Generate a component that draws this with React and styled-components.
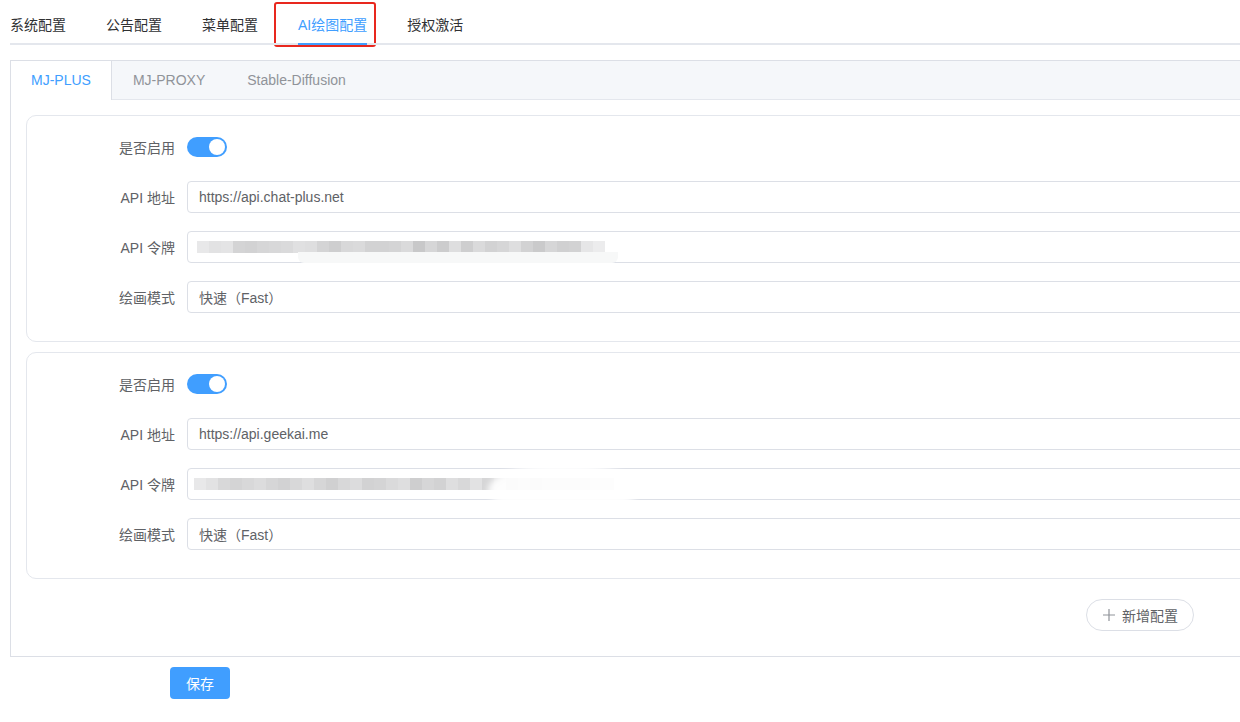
import React from "react";
import styled, { createGlobalStyle } from "styled-components";

const GlobalStyle = createGlobalStyle`
  html, body { margin: 0; padding: 0; background: #fff; overflow: hidden; }
  body { font-family: "Liberation Sans", "Noto Sans CJK SC", sans-serif; font-size: 14px; color: #606266; }
  * { box-sizing: border-box; }
`;

const Page = styled.div`
  width: 1330px;
  padding: 5px 0 0 10px;
`;

const TopNav = styled.div`
  position: relative;
  display: flex;
  height: 40px;
  margin-bottom: 15px;
  &::after {
    content: "";
    position: absolute;
    left: 0;
    right: 0;
    bottom: 0;
    height: 2px;
    background: #e4e7ed;
  }
`;

const TopItem = styled.div`
  position: relative;
  height: 40px;
  line-height: 40px;
  padding: 0 20px;
  font-size: 14px;
  color: ${(p) => (p.$active ? "#409eff" : "#303133")};
  &:first-child { padding-left: 0; }
  &::after {
    content: "";
    display: ${(p) => (p.$active ? "block" : "none")};
    position: absolute;
    left: 20px;
    right: 20px;
    bottom: 0;
    height: 2px;
    background: #409eff;
    z-index: 1;
  }
`;

const Annotation = styled.span`
  position: absolute;
  left: -4px;
  right: 11px;
  top: -3px;
  bottom: -2px;
  border: 2px solid #e8281e;
  border-radius: 3px;
  pointer-events: none;
`;

const Card = styled.div`
  border: 1px solid #dcdfe6;
  background: #fff;
`;

const CardHeader = styled.div`
  display: flex;
  height: 39px;
  background: #f5f7fa;
  border-bottom: 1px solid #e4e7ed;
`;

const CardTab = styled.div`
  height: 39px;
  line-height: 38px;
  padding: 0 20px;
  margin-bottom: -1px;
  font-size: 14px;
  border-left: 1px solid ${(p) => (p.$active ? "#dcdfe6" : "transparent")};
  border-right: 1px solid ${(p) => (p.$active ? "#dcdfe6" : "transparent")};
  background: ${(p) => (p.$active ? "#fff" : "transparent")};
  color: ${(p) => (p.$active ? "#409eff" : "#909399")};
  &:first-child { margin-left: -1px; }
`;

const CardBody = styled.div`
  padding: 15px 15px 10px;
`;

const ConfigBox = styled.div`
  border: 1px solid #e4e7ed;
  border-radius: 10px;
  padding: 15px 0 10px 10px;
  margin-bottom: 10px;
`;

const FormRow = styled.div`
  display: flex;
  align-items: center;
  height: 32px;
  margin-bottom: 18px;
`;

const Label = styled.label`
  width: 150px;
  padding-right: 12px;
  text-align: right;
  font-size: 14px;
  color: #606266;
  flex-shrink: 0;
`;

const Switch = styled.div`
  position: relative;
  width: 40px;
  height: 20px;
  border-radius: 10px;
  background: #409eff;
  &::after {
    content: "";
    position: absolute;
    top: 2px;
    right: 2px;
    width: 16px;
    height: 16px;
    border-radius: 50%;
    background: #fff;
  }
`;

const Input = styled.div`
  position: relative;
  flex: 1;
  height: 32px;
  margin-right: 20px;
  border: 1px solid #dcdfe6;
  border-radius: 4px;
  padding: 0 11px;
  display: flex;
  align-items: center;
  font-size: 14px;
  color: #606266;
`;

const Pixels = styled.div`
  display: flex;
  height: 12px;
  margin-left: ${(p) => p.$offset}px;
`;

const Pixel = styled.span`
  width: 12px;
  height: 12px;
`;

const Smear = styled.span`
  position: absolute;
  background: rgba(255, 255, 255, 0.92);
  border-radius: 50%;
  filter: blur(3px);
  pointer-events: none;
`;

const Haze = styled.span`
  position: absolute;
  height: 11px;
  background: #f7f8f8;
  border-radius: 0 0 6px 6px;
  pointer-events: none;
`;

const OpsRow = styled.div`
  display: flex;
  justify-content: flex-end;
  padding: 10px 120px 15px 0;
`;

const RoundButton = styled.button`
  display: inline-flex;
  align-items: center;
  gap: 6px;
  height: 32px;
  padding: 0 15px;
  border: 1px solid #dcdfe6;
  border-radius: 20px;
  background: #fff;
  color: #606266;
  font-family: inherit;
  font-size: 14px;
  cursor: pointer;
`;

const SaveRow = styled.div`
  padding: 10px 0 0 160px;
`;

const PrimaryButton = styled.button`
  height: 32px;
  padding: 0 16px;
  border: none;
  border-radius: 4px;
  background: #409eff;
  color: #fff;
  font-family: inherit;
  font-size: 14px;
`;

const shadesA = [232, 226, 228, 212, 210, 214, 216, 218, 224, 222, 212, 206, 216, 218, 210, 210, 212, 218, 200, 214, 204, 222, 206, 218, 210, 214, 222, 210, 202, 214, 208, 210, 230, 236];
const shadesB = [232, 226, 216, 212, 216, 220, 214, 210, 216, 222, 214, 208, 216, 220, 210, 212, 218, 222, 206, 214, 210, 222, 216, 226, 214, 220, 206, 212, 204, 216, 210, 212, 214, 220, 226];

function Blur({ shades, offset }) {
  return (
    <Pixels $offset={offset}>
      {shades.map((s, i) => (
        <Pixel key={i} style={{ background: `rgb(${s},${s},${s + 1})` }} />
      ))}
    </Pixels>
  );
}

function ConfigCard({ api, shades, offset, smear }) {
  return (
    <ConfigBox>
      <FormRow>
        <Label>是否启用</Label>
        <Switch />
      </FormRow>
      <FormRow>
        <Label>API 地址</Label>
        <Input>{api}</Input>
      </FormRow>
      <FormRow>
        <Label>API 令牌</Label>
        <Input>
          <Blur shades={shades} offset={offset} />
          {smear ? (
            <Smear style={{ left: 300, top: -6, width: 150, height: 54 }} />
          ) : (
            <Haze style={{ left: 110, top: 20, width: 320 }} />
          )}
        </Input>
      </FormRow>
      <FormRow>
        <Label>绘画模式</Label>
        <Input>快速（Fast）</Input>
      </FormRow>
    </ConfigBox>
  );
}

const PlusIcon = () => (
  <svg width="14" height="14" viewBox="0 0 14 14">
    <path d="M7 1v12M1 7h12" stroke="#909399" strokeWidth="1.2" fill="none" />
  </svg>
);

export default function App() {
  return (
    <>
      <GlobalStyle />
      <Page>
        <TopNav>
          <TopItem>系统配置</TopItem>
          <TopItem>公告配置</TopItem>
          <TopItem>菜单配置</TopItem>
          <TopItem $active>
            AI绘图配置
            <Annotation />
          </TopItem>
          <TopItem>授权激活</TopItem>
        </TopNav>
        <Card>
          <CardHeader>
            <CardTab $active>MJ-PLUS</CardTab>
            <CardTab>MJ-PROXY</CardTab>
            <CardTab>Stable-Diffusion</CardTab>
          </CardHeader>
          <CardBody>
            <ConfigCard api="https://api.chat-plus.net" shades={shadesA} offset={-2} />
            <ConfigCard api="https://api.geekai.me" shades={shadesB} offset={-5} smear />
            <OpsRow>
              <RoundButton>
                <PlusIcon />
                新增配置
              </RoundButton>
            </OpsRow>
          </CardBody>
        </Card>
        <SaveRow>
          <PrimaryButton>保存</PrimaryButton>
        </SaveRow>
      </Page>
    </>
  );
}
